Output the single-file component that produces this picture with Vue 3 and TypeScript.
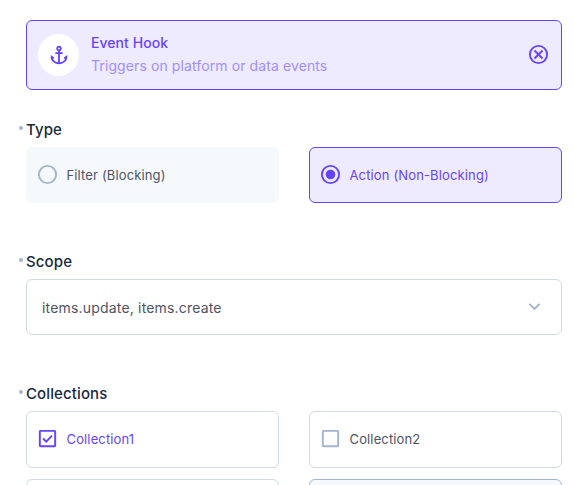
<script setup lang="ts">
import { ref } from 'vue'

interface Choice {
  id: string
  label: string
}

const types: Choice[] = [
  { id: 'filter', label: 'Filter (Blocking)' },
  { id: 'action', label: 'Action (Non-Blocking)' },
]
const collections: Choice[] = [
  { id: 'c1', label: 'Collection1' },
  { id: 'c2', label: 'Collection2' },
]
const selectedType = ref('action')
const scope = ref<string[]>(['items.update', 'items.create'])
const checked = ref<string[]>(['c1'])

function toggle(id: string): void {
  checked.value = checked.value.includes(id)
    ? checked.value.filter((item) => item !== id)
    : [...checked.value, id]
}
</script>

<template>
  <main class="panel">
    <section class="trigger">
      <span class="badge">
        <svg class="icon anchor" viewBox="0 0 24 24" fill="currentColor">
          <path d="M17 15l1.55 1.55c-.96 1.69-3.33 3.04-5.55 3.37V11h3V9h-3V7.82C14.16 7.4 15 6.3 15 5c0-1.65-1.35-3-3-3S9 3.35 9 5c0 1.3.84 2.4 2 2.82V9H8v2h3v8.92c-2.22-.33-4.59-1.68-5.55-3.37L7 15l-4-3v3c0 3.88 4.92 7 9 7s9-3.12 9-7v-3l-4 3zM12 4c.55 0 1 .45 1 1s-.45 1-1 1-1-.45-1-1 .45-1 1-1z" />
        </svg>
      </span>
      <div class="text">
        <div class="name">Event Hook</div>
        <div class="description">Triggers on platform or data events</div>
      </div>
      <svg class="icon close" viewBox="0 0 24 24" fill="none" stroke="currentColor" stroke-width="2">
        <circle cx="12" cy="12" r="9" />
        <path d="M7.8 7.8l8.4 8.4M16.2 7.8l-8.4 8.4" />
      </svg>
    </section>

    <section class="field type-field">
      <h2 class="label">Type</h2>
      <div class="grid">
        <div
          v-for="item in types"
          :key="item.id"
          class="option radio"
          :class="{ active: selectedType === item.id }"
          @click="selectedType = item.id"
        >
          <svg class="icon" viewBox="0 0 24 24" fill="none" stroke="currentColor" stroke-width="2">
            <circle cx="12" cy="12" r="9" />
            <circle v-if="selectedType === item.id" cx="12" cy="12" r="5" fill="currentColor" stroke="none" />
          </svg>
          <span>{{ item.label }}</span>
        </div>
      </div>
    </section>

    <section class="field">
      <h2 class="label">Scope</h2>
      <div class="select">
        <span>{{ scope.join(', ') }}</span>
        <svg class="icon chevron" viewBox="0 0 24 24" fill="currentColor">
          <path d="M7.41 8.59L12 13.17l4.59-4.58L18 10l-6 6-6-6z" />
        </svg>
      </div>
    </section>

    <section class="field">
      <h2 class="label">Collections</h2>
      <div class="grid">
        <div
          v-for="item in collections"
          :key="item.id"
          class="option check"
          :class="{ ticked: checked.includes(item.id) }"
          @click="toggle(item.id)"
        >
          <svg class="icon" viewBox="0 0 24 24" fill="none" stroke="currentColor" stroke-width="2">
            <rect x="4" y="4" width="16" height="16" rx="0.6" />
            <path v-if="checked.includes(item.id)" d="M7.4 12l3.3 3.3 6-6.3" />
          </svg>
          <span>{{ item.label }}</span>
        </div>
        <div class="option check"></div>
        <div class="option check add"></div>
      </div>
    </section>
  </main>
</template>

<style>
body {
  margin: 0;
  background: #fff;
}
</style>

<style scoped>
.panel {
  box-sizing: border-box;
  height: 485px;
  overflow: hidden;
  padding: 20px 12px 0 26px;
  font-family: Inter, 'Liberation Sans', sans-serif;
  font-size: 15px;
  color: #4f5464;
  background: #fff;
}
.icon {
  display: block;
  flex: none;
  width: 23px;
  height: 23px;
}
.trigger {
  box-sizing: border-box;
  display: flex;
  align-items: center;
  height: 70px;
  padding: 0 11px;
  border: 1px solid #6644ff;
  border-radius: 6px;
  color: #6644ff;
  background: #eeeaff;
}
.badge {
  display: flex;
  align-items: center;
  justify-content: center;
  width: 41px;
  height: 42px;
  border-radius: 50%;
  background: #fff;
}
.anchor {
  width: 22px;
  height: 22px;
}
.close {
  margin-bottom: 1px;
}
.text {
  flex: 1;
  padding-left: 12px;
  margin-bottom: 2px;
  line-height: 23px;
}
.name {
  font-size: 14px;
  font-weight: 500;
  letter-spacing: 0.05px;
}
.description {
  font-size: 14px;
  letter-spacing: 0.1px;
  color: #a28fff;
}
.field {
  padding-top: 50px;
}
.type-field {
  padding-top: 31px;
}
.label {
  position: relative;
  margin: 0;
  height: 26px;
  font-size: 15px;
  line-height: 18px;
  font-weight: 500;
  letter-spacing: 0.12px;
  color: #172940;
}
.label::before {
  content: '';
  position: absolute;
  left: -7px;
  top: 5px;
  width: 4px;
  height: 4px;
  border-radius: 50%;
  background: #a2b5cd;
}
.grid {
  display: grid;
  grid-template-columns: 1fr 1fr;
  gap: 11px 30px;
}
.option {
  box-sizing: border-box;
  display: flex;
  align-items: center;
  gap: 7.5px;
  height: 56px;
  padding: 0 9px 1px;
  border: 1px solid #d3dae4;
  border-radius: 6px;
  font-size: 13px;
  letter-spacing: 0.14px;
}
.radio span {
  padding-top: 1px;
}
.option .icon {
  color: #a2b5cd;
}
.radio {
  border-color: #f5f9fc;
  background: #f5f9fc;
}
.active {
  border-color: #6644ff;
  color: #6644ff;
  background: #eeeaff;
}
.check {
  height: 57px;
  padding-bottom: 2px;
}
.ticked,
.active .icon,
.ticked .icon {
  color: #6644ff;
}
.add {
  border-color: #a2b5cd;
  background: #f5f9fc;
}
.select {
  box-sizing: border-box;
  display: flex;
  align-items: center;
  justify-content: space-between;
  height: 56px;
  padding: 1px 15px 0;
  border: 1px solid #d3dae4;
  border-radius: 6px;
  font-size: 14px;
  letter-spacing: 0.18px;
}
.chevron {
  margin-bottom: 3px;
  color: #a2b5cd;
}
</style>
